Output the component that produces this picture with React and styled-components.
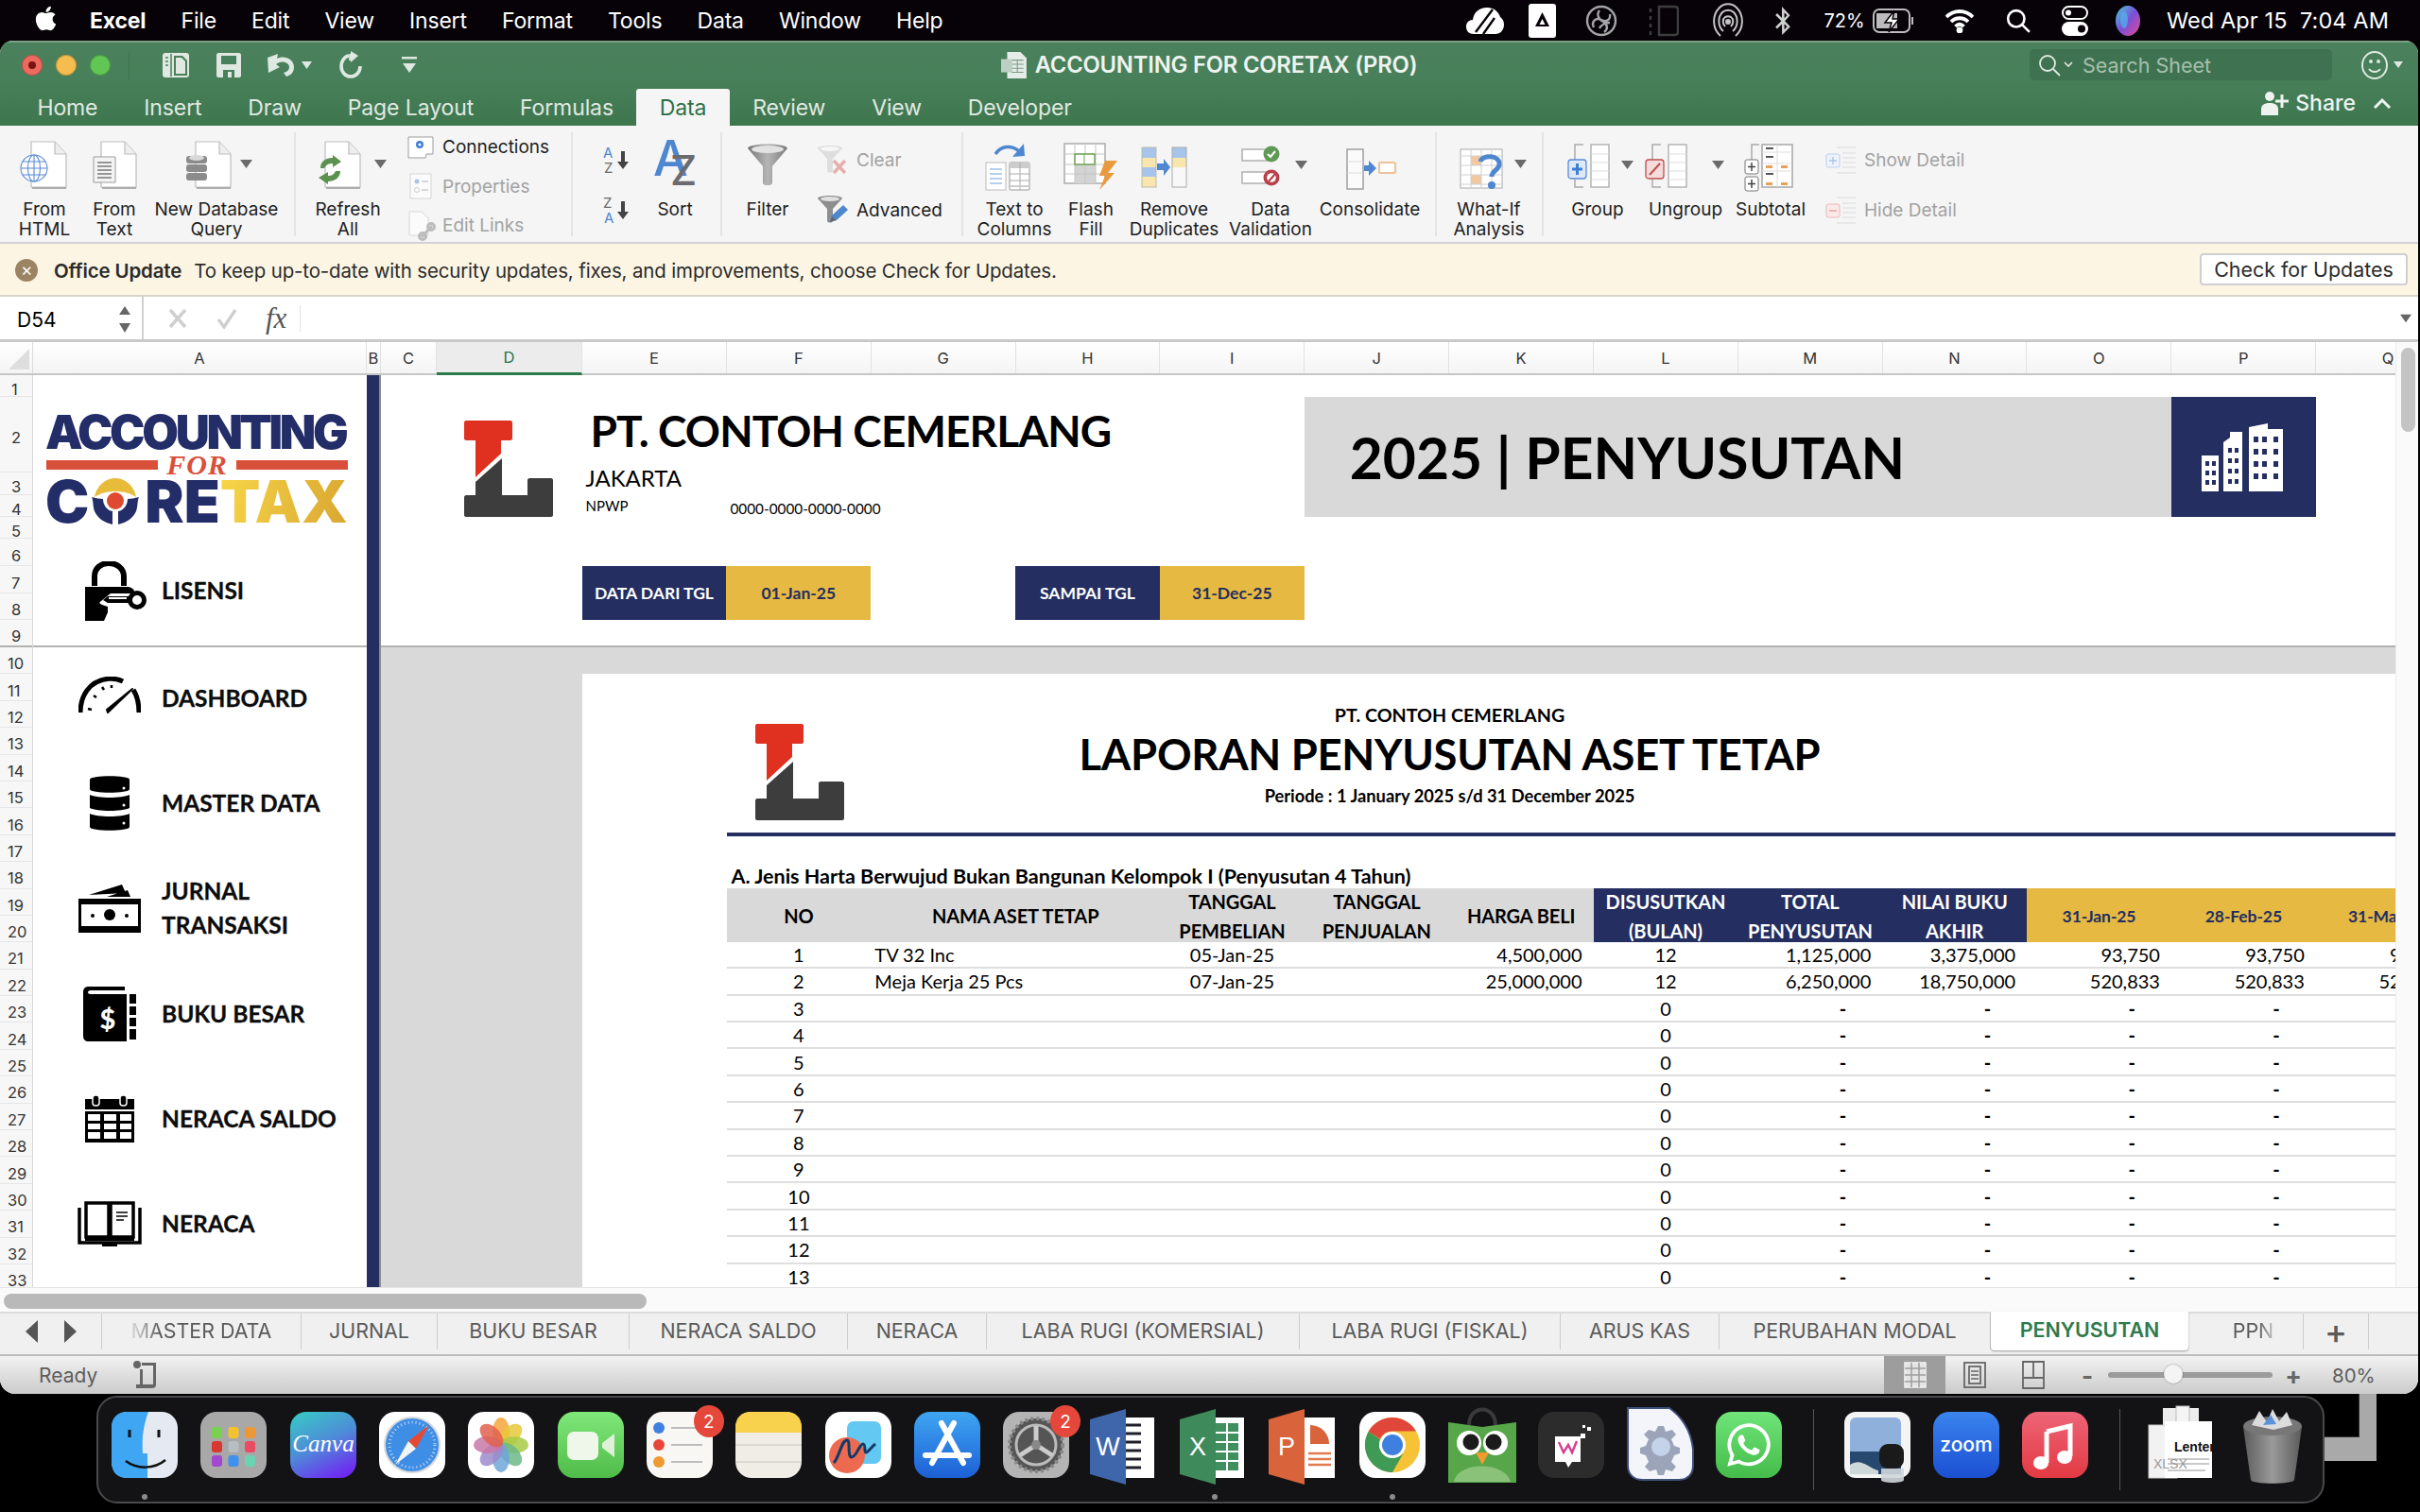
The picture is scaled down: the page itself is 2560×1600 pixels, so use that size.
import React from 'react';
import styled, { createGlobalStyle } from 'styled-components';
import { FaApple, FaBluetoothB, FaWhatsapp } from 'react-icons/fa';

const NAVY = '#242e61';
const GOLD = '#e5b942';
const COL = 152.85;
const SHEET_COLS = `59px 153.5px repeat(13, ${COL}px)`;

const GlobalStyle = createGlobalStyle`
  html, body { margin: 0; padding: 0; background: #000; }
  * { box-sizing: border-box; }
  body { font-family: Inter, "Liberation Sans", sans-serif; overflow: hidden; }
`;

const Screen = styled.div`
  width: 2560px;
  height: 1600px;
  background: #000;
  position: relative;
  overflow: hidden;
`;

/* ---- mac menu bar ---- */
const MenuBar = styled.div`
  height: 43px;
  background: #060208;
  color: #fff;
  display: flex;
  align-items: center;
  font-size: 23px;
  padding-left: 34px;
`;
const AppleMark = styled.div`
  width: 61px;
  display: flex;
  margin-top: -4px;
  font-size: 29px;
`;
const MenuList = styled.div`
  display: flex;
  gap: 37.2px;
`;
const MenuItem = styled.span`
  font-weight: ${p => (p.$bold ? 700 : 400)};
  letter-spacing: -0.2px;
`;
const StatusTray = styled.div`
  margin-left: auto;
  display: flex;
  align-items: center;
  padding-right: 33px;
`;
const TraySlot = styled.div`
  width: ${p => p.$w}px;
  display: flex;
  justify-content: center;
  align-items: center;
`;
const TrayText = styled.span`
  font-size: 23.5px;
  margin-left: 13px;
  letter-spacing: 0.1px;
  white-space: pre;
`;
const BatteryText = styled.span`
  font-size: 20px;
  margin-right: 8px;
`;

/* ---- excel window ---- */
const Window = styled.div`
  width: 2558px;
  height: 1432px;
  border-radius: 14px 14px 16px 16px;
  background: #fff;
  overflow: hidden;
  display: flex;
  flex-direction: column;
  position: relative;
  z-index: 2;
`;
const GreenHead = styled.div`
  height: 90px;
  flex: none;
  background: linear-gradient(#4b805c 0%, #47805a 40%, #3e774e 100%);
  border-top: 2px solid #78a085;
`;
const TitleRow = styled.div`
  height: 47px;
  display: grid;
  grid-template-columns: 1fr auto 1fr;
  align-items: center;
`;
const TitleLeft = styled.div`
  display: flex;
  align-items: center;
  padding-left: 23px;
`;
const Light = styled.span`
  width: 22px;
  height: 22px;
  border-radius: 50%;
  background: ${p => p.$c};
  border: 1px solid rgba(0, 0, 0, 0.2);
  margin-right: 14px;
  display: flex;
  align-items: center;
  justify-content: center;
  &::after {
    content: '';
    width: 8px;
    height: 8px;
    border-radius: 50%;
    background: ${p => p.$dot || 'transparent'};
  }
`;
const QuickTools = styled.div`
  margin-left: 5px;
  padding-left: 34px;
  border-left: 1px solid #43734f;
  height: 30px;
  display: flex;
  align-items: center;
  gap: 28px;
`;
const CustomizeSlot = styled.span`
  display: flex;
  margin-left: 14px;
`;
const TitleCenter = styled.div`
  display: flex;
  align-items: center;
  gap: 8px;
  color: #eef3ef;
  font-size: 23.8px;
  font-weight: 600;
  letter-spacing: -0.2px;
`;
const TitleRight = styled.div`
  display: flex;
  align-items: center;
  justify-content: flex-end;
  padding-right: 16px;
`;
const SearchBox = styled.div`
  width: 320px;
  height: 33px;
  background: #3f7250;
  border-radius: 5px;
  display: flex;
  align-items: center;
  padding-left: 9px;
  color: #a6c0ad;
  font-size: 21.5px;
  margin-right: 31px;
`;
const SearchCaret = styled.svg`
  margin: 0 10px 0 3px;
`;
const TabsRow = styled.div`
  height: 41px;
  display: flex;
  align-items: flex-end;
  padding-left: 15px;
`;
const RibbonTab = styled.div`
  height: 39px;
  padding: 0 24.4px;
  display: flex;
  align-items: center;
  font-size: 23px;
  letter-spacing: -0.1px;
  border-radius: 3px 3px 0 0;
  color: ${p => (p.$active ? '#2c7048' : '#e0e9e2')};
  background: ${p => (p.$active ? '#f5f5f5' : 'transparent')};
`;
const ShareBox = styled.div`
  margin-left: auto;
  display: flex;
  align-items: center;
  gap: 6px;
  color: #eef3ef;
  font-size: 23px;
  font-weight: 500;
  padding-right: 28px;
  height: 41px;
  align-self: flex-start;
  margin-top: -4px;
`;
const ShareCaret = styled.span`
  margin-left: 12px;
  display: flex;
`;

/* ---- ribbon ---- */
const Ribbon = styled.div`
  height: 125px;
  flex: none;
  background: #f5f5f5;
  border-bottom: 2px solid #d3d3d3;
  display: flex;
  align-items: flex-start;
  padding-top: 7px;
`;
const RibbonGroup = styled.div`
  width: ${p => p.$w}px;
  height: 110px;
  flex: none;
  display: flex;
  padding-left: ${p => p.$pad || 0}px;
  border-right: ${p => (p.$last ? 'none' : '2px solid #e4e4e4')};
`;
const RibbonButton = styled.div`
  width: ${p => p.$w}px;
  flex: none;
  margin-left: ${p => p.$ml || 0}px;
  padding-top: 3px;
  display: flex;
  flex-direction: column;
  align-items: center;
  font-size: 19px;
  line-height: 21.4px;
  color: #1e1e1e;
  text-align: center;
  white-space: nowrap;
  svg { display: block; flex: none; }
  span { flex: none; }
`;
const Stack = styled.div`
  margin-left: ${p => p.$ml || 0}px;
  margin-top: ${p => p.$mt || 0}px;
  flex: none;
  display: flex;
  flex-direction: column;
`;
const StackRow = styled.div`
  height: ${p => p.$h}px;
  flex: none;
  display: flex;
  align-items: center;
  gap: ${p => p.$gap ?? 7}px;
  font-size: 19px;
  white-space: nowrap;
  color: ${p => (p.$dim ? '#a2a2a2' : '#1e1e1e')};
`;

/* ---- update bar + formula bar ---- */
const UpdateBar = styled.div`
  height: 56px;
  flex: none;
  background: #fcf5e3;
  border-bottom: 2px solid #d6d3ca;
  display: flex;
  align-items: center;
  padding: 2px 11px 0 16px;
  font-size: 20.45px;
  color: #2b2b2b;
  letter-spacing: -0.12px;
`;
const UpdateClose = styled.span`
  width: 24px;
  height: 24px;
  border-radius: 50%;
  background: #9b8463;
  color: #fff;
  display: flex;
  align-items: center;
  justify-content: center;
  font-size: 15px;
  margin-right: 17px;
`;
const UpdateTitle = styled.b`
  font-weight: 600;
  margin-right: 13px;
`;
const UpdateButton = styled.div`
  margin-left: auto;
  width: 220px;
  height: 34px;
  margin-top: -2px;
  background: #fff;
  border: 2px solid #cfcfcf;
  border-radius: 4px;
  display: flex;
  align-items: center;
  justify-content: center;
  font-size: 21.4px;
  letter-spacing: 0;
`;
const FormulaBar = styled.div`
  height: 48px;
  flex: none;
  background: #fff;
  border-bottom: 3px solid #c9c9c9;
  display: flex;
  align-items: center;
  position: relative;
`;
const NameBox = styled.div`
  width: 152px;
  height: 100%;
  border-right: 2px solid #d0d0d0;
  display: flex;
  align-items: center;
  justify-content: space-between;
  padding: 3px 11px 0 18px;
  font-size: 21px;
`;
const FormulaTools = styled.div`
  display: flex;
  align-items: center;
  gap: 29px;
  padding: 0 14px 0 25px;
  height: 28px;
  border-right: 1px solid #e2e2e2;
`;
const Fx = styled.span`
  font-family: "Liberation Serif", serif;
  font-style: italic;
  font-size: 31px;
  color: #555;
`;
const FormulaCaret = styled.div`
  margin-left: auto;
  margin-right: 7px;
  display: flex;
`;

/* ---- sheet ---- */
const SheetArea = styled.div`
  flex: none;
  height: 1000px;
  display: flex;
`;
const SheetMain = styled.div`
  width: 2534px;
  flex: none;
  display: flex;
  flex-direction: column;
  overflow: hidden;
`;
const VScroll = styled.div`
  flex: 1;
  background: #fafafa;
  border-left: 1px solid #ececec;
  padding: 6px 0 0 5px;
`;
const VThumb = styled.div`
  width: 15px;
  height: 89px;
  border-radius: 8px;
  background: #c4c4c4;
`;
const ColumnHeads = styled.div`
  height: 35px;
  flex: none;
  display: flex;
  background: linear-gradient(#fff, #f4f4f4);
  border-bottom: 2px solid #c6c6c6;
  font-size: 16.5px;
  color: #333;
`;
const CornerCell = styled.div`
  width: 35px;
  flex: none;
  border-right: 1px solid #dcdcdc;
  display: flex;
  align-items: flex-end;
  justify-content: flex-end;
  padding: 0 3px 4px 0;
`;
const ColHead = styled.div`
  width: ${p => p.$w}px;
  flex: none;
  display: flex;
  align-items: center;
  justify-content: center;
  border-right: 1px solid #e2e2e2;
  color: ${p => (p.$sel ? '#2c7048' : '#333')};
  background: ${p => (p.$sel ? '#ececec' : 'transparent')};
  border-bottom: ${p => (p.$sel ? '3px solid #2c7a4b' : 'none')};
  margin-bottom: ${p => (p.$sel ? '-2px' : '0')};
`;
const SheetBody = styled.div`
  flex: 1;
  display: flex;
  min-height: 0;
`;
const RowHeads = styled.div`
  width: 35px;
  flex: none;
  background: #f7f7f7;
  border-right: 1px solid #d8d8d8;
  font-size: 16.5px;
  color: #333;
`;
const RowHead = styled.div`
  height: ${p => p.$h}px;
  padding: 7px 0 0 ${p => (p.$wide ? 8 : 12)}px;
  display: flex;
  align-items: center;
  border-bottom: 1px solid #e6e6e6;
  ${p => (p.$freeze ? 'border-bottom: 2px solid #b3b3b3;' : '')}
`;
const SideColumn = styled.div`
  width: 353px;
  flex: none;
  background: #fff;
  display: flex;
  flex-direction: column;
`;
const SideTop = styled.div`
  height: 288px;
  flex: none;
  padding: 41px 0 0 13px;
  border-bottom: 2px solid #b3b3b3;
`;
const BrandLine = styled.div`
  font-family: Inter, sans-serif;
  font-weight: 900;
  line-height: 1;
  white-space: nowrap;
`;
const BrandTop = styled(BrandLine)`
  height: 48px;
  font-size: 50px;
  letter-spacing: -3.3px;
  color: #232d68;
  margin-top: -6px;
`;
const BrandMid = styled.div`
  width: 319px;
  height: 24px;
  margin-left: 1px;
  display: flex;
  align-items: center;
  gap: 9px;
  font-family: "Liberation Serif", serif;
  font-style: italic;
  font-weight: 700;
  font-size: 30px;
  line-height: 24px;
  letter-spacing: 1px;
  color: #d9503a;
`;
const BrandBar = styled.span`
  flex: 1;
  height: 10px;
  background: #d9503a;
`;
const BrandBottom = styled(BrandLine)`
  height: 50px;
  font-size: 62px;
  letter-spacing: 0;
  color: #232d68;
  display: flex;
  align-items: center;
  margin-top: 2px;
`;
const BrandGold = styled.span`
  color: #e8bb3a;
  background: linear-gradient(100deg, #f7d648, #d9a631);
  -webkit-background-clip: text;
  background-clip: text;
  -webkit-text-fill-color: transparent;
`;
const NavList = styled.div`
  display: flex;
  flex-direction: column;
  padding-left: 48px;
  margin-top: -2px;
`;
const NavItem = styled.div`
  height: ${p => p.$h || 111.3}px;
  flex: none;
  display: grid;
  grid-template-columns: 65px 1fr;
  gap: 23px;
  align-items: center;
  justify-items: center;
  font-family: Lato, sans-serif;
  font-weight: 700;
  font-size: 24.5px;
  line-height: 36px;
  color: #0c0c0c;
  -webkit-text-stroke: 0.3px #0c0c0c;
  svg { display: block; }
`;
const NavLabel = styled.div`
  justify-self: start;
`;
const LicenseRow = styled(NavList)`
  margin-top: 37.5px;
  padding-left: 35px;
`;
const LockSlot = styled.div`
  margin-left: 14px;
`;
const ColB = styled.div`
  width: 15px;
  flex: none;
  background: ${NAVY};
  border-right: 2px solid #8d8d8d;
`;
const Workspace = styled.div`
  flex: 1;
  min-width: 0;
  display: flex;
  flex-direction: column;
`;
const TopPanel = styled.div`
  height: 288px;
  flex: none;
  background: #fff;
  border-bottom: 2px solid #b3b3b3;
  display: grid;
  grid-template-columns: ${SHEET_COLS};
  grid-template-rows: 23px 80px 24px 23px 23px 29px 29px 28px 27px;
`;
const TopLogo = styled.div`
  grid-column: 2 / 3;
  grid-row: 2 / 6;
  padding: 25px 0 0 29px;
`;
const CompanyBlock = styled.div`
  grid-column: 3 / 8;
  grid-row: 2 / 6;
  font-family: Lato, sans-serif;
  display: flex;
  flex-direction: column;
  color: #000;
`;
const CompanyName = styled.div`
  height: 60px;
  margin-top: 6px;
  padding-left: 9px;
  font-weight: 700;
  font-size: 46px;
  line-height: 60px;
  letter-spacing: -0.9px;
`;
const CompanyCity = styled.div`
  height: 30px;
  margin-top: 5px;
  padding-left: 4px;
  font-size: 24px;
  line-height: 30px;
`;
const NpwpRow = styled.div`
  height: 30px;
  display: grid;
  grid-template-columns: 153px auto;
  padding-left: 4px;
  font-size: 15px;
  line-height: 28px;
`;
const NpwpValue = styled.span`
  font-size: 15.3px;
  padding-top: 3px;
`;
const Banner = styled.div`
  grid-column: 8 / 14;
  grid-row: 2 / 5;
  background: #d9d9d9;
  display: flex;
  align-items: center;
  padding-left: 48px;
  font-family: Lato, sans-serif;
  font-weight: 700;
  font-size: 60.5px;
  color: #000;
  white-space: nowrap;
`;
const BannerIcon = styled.div`
  grid-column: 14 / 15;
  grid-row: 2 / 5;
  background: ${NAVY};
  display: flex;
  align-items: center;
  justify-content: center;
`;
const DateCell = styled.div`
  grid-column: ${p => p.$col} / span 1;
  grid-row: 7 / 9;
  background: ${p => (p.$gold ? GOLD : NAVY)};
  color: ${p => (p.$gold ? NAVY : '#fff')};
  display: flex;
  align-items: center;
  justify-content: center;
  font-family: Lato, sans-serif;
  font-weight: 700;
  font-size: 17.5px;
  white-space: nowrap;
`;
const ReportBack = styled.div`
  flex: 1;
  min-height: 0;
  background: #d9d9d9;
  padding: 28px 0 0 212.5px;
  overflow: hidden;
`;
const ReportPage = styled.div`
  background: #fff;
  min-height: 700px;
  padding-left: 153px;
  font-family: Lato, sans-serif;
  color: #000;
`;
const ReportHead = styled.div`
  width: 1530px;
  height: 168px;
  display: grid;
  grid-template-columns: 1fr auto 1fr;
`;
const ReportLogo = styled.div`
  padding: 53px 0 0 30px;
`;
const ReportTitles = styled.div`
  padding-top: 31px;
  display: flex;
  flex-direction: column;
  align-items: center;
  font-weight: 700;
`;
const ReportCompany = styled.div`
  font-size: 19.7px;
  line-height: 26px;
`;
const ReportName = styled.div`
  font-size: 45.4px;
  line-height: 56px;
  letter-spacing: -0.3px;
  white-space: nowrap;
`;
const ReportPeriod = styled.div`
  font-size: 18.3px;
  line-height: 26px;
  margin-top: 3px;
`;
const ReportRule = styled.div`
  height: 4px;
  background: ${NAVY};
`;
const SectionTitle = styled.div`
  height: 55px;
  padding: 29px 0 0 5px;
  font-weight: 700;
  font-size: 21.5px;
  line-height: 26px;
`;
const AssetTable = styled.div`
  display: grid;
  grid-template-columns: repeat(12, ${COL}px);
  grid-auto-rows: 28.42px;
  font-size: 20px;
`;
const HeadCell = styled.div`
  grid-column: span ${p => p.$span || 1};
  grid-row: span 2;
  display: flex;
  align-items: center;
  justify-content: center;
  text-align: center;
  font-weight: 700;
  line-height: 31px;
  white-space: nowrap;
  overflow: hidden;
  padding-top: ${p => (p.$double ? 4 : 2)}px;
  letter-spacing: -0.1px;
  background: ${p => (p.$tone === 'navy' ? NAVY : p.$tone === 'gold' ? GOLD : '#d9d9d9')};
  color: ${p => (p.$tone === 'navy' ? '#fff' : p.$tone === 'gold' ? NAVY : '#000')};
  font-size: ${p => (p.$tone === 'gold' ? 17.5 : 20)}px;
`;
const BodyCell = styled.div`
  display: flex;
  align-items: center;
  justify-content: ${p => (p.$align === 'right' ? 'flex-end' : p.$align === 'left' ? 'flex-start' : 'center')};
  padding-left: ${p => (p.$align === 'left' ? 4 : 0)}px;
  padding-right: ${p => (p.$align === 'right' ? p.$dash ? 38 : 12 : 0)}px;
  border-bottom: 2px solid #dedede;
  white-space: nowrap;
  font-weight: ${p => (p.$dash ? 700 : 400)};
`;
const HScrollRow = styled.div`
  height: 26px;
  flex: none;
  background: #fafafa;
  border-top: 1px solid #e4e4e4;
  padding: 6px 0 0 4px;
`;
const HThumb = styled.div`
  width: 680px;
  height: 16px;
  border-radius: 8px;
  background: #b9b9b9;
`;

/* ---- sheet tabs + status bar ---- */
const TabsBar = styled.div`
  height: 47px;
  flex: none;
  background: #f0f0f0;
  border-top: 2px solid #dcdcdc;
  border-bottom: 2px solid #bdbdbd;
  display: flex;
  font-size: 21.4px;
  color: #5a5a5a;
`;
const TabArrows = styled.div`
  width: 108px;
  flex: none;
  display: flex;
  align-items: center;
  justify-content: center;
  gap: 26px;
  height: 38px;
  border-right: 1px solid #cdcdcd;
`;
const SheetTab = styled.div`
  width: ${p => p.$w}px;
  flex: none;
  height: ${p => (p.$active ? 41 : 38)}px;
  margin-top: ${p => (p.$active ? -2 : 0)}px;
  padding-bottom: ${p => (p.$active ? 3 : 2)}px;
  display: flex;
  align-items: center;
  justify-content: center;
  border-right: ${p => (p.$active ? 'none' : '1px solid #cdcdcd')};
  white-space: nowrap;
  color: ${p => (p.$active ? '#2f7a4c' : 'inherit')};
  font-weight: ${p => (p.$active ? 600 : 400)};
  background: ${p => (p.$active ? '#fff' : 'transparent')};
  border-radius: ${p => (p.$active ? '0 0 4px 4px' : '0')};
  box-shadow: ${p => (p.$active ? '0 1px 2px rgba(0,0,0,.35)' : 'none')};
`;
const FadeText = styled.span`
  margin-left: ${p => (p.$fade === 'end' ? 16 : 0)}px;
  -webkit-mask-image: ${p => (p.$fade === 'end'
    ? 'linear-gradient(to right, #000 62%, rgba(0,0,0,.3))'
    : 'linear-gradient(to right, rgba(0,0,0,.25) 4%, #000 20%)')};
`;
const AddSheet = styled.div`
  width: 69px;
  height: 38px;
  display: flex;
  align-items: center;
  justify-content: center;
  font-size: 36px;
  font-weight: 500;
  border-right: 1px solid #cdcdcd;
`;
const StatusBar = styled.div`
  flex: 1;
  display: flex;
  align-items: center;
  padding-left: 41px;
  background: linear-gradient(#f2f2f2, #cbcbcb);
  font-size: 21px;
  color: #5d5d5d;
`;
const MacroIcon = styled.div`
  margin-left: 37px;
  display: flex;
`;
const ViewModes = styled.div`
  margin-left: auto;
  display: flex;
  align-items: stretch;
  height: 100%;
`;
const ViewMode = styled.div`
  width: ${p => p.$w}px;
  display: flex;
  align-items: center;
  justify-content: center;
  background: ${p => (p.$on ? '#9d9d9d' : 'transparent')};
`;
const ZoomArea = styled.div`
  display: flex;
  align-items: center;
  width: 376px;
  padding-left: 15px;
`;
const ZoomSign = styled.span`
  font-size: 26px;
  font-weight: 700;
  color: #666;
  width: 22px;
  text-align: center;
`;
const ZoomTrack = styled.div`
  width: 174px;
  height: 6px;
  margin: 0 11px;
  border-radius: 3px;
  background: #9b9b9b;
  position: relative;
`;
const ZoomThumb = styled.span`
  position: absolute;
  left: 59px;
  top: -8px;
  width: 20px;
  height: 20px;
  border-radius: 50%;
  background: #f4f4f4;
  box-shadow: 0 0 2px rgba(0,0,0,.4);
`;
const ZoomValue = styled.span`
  margin-left: 30px;
  font-size: 20.5px;
`;

/* ---- dock ---- */
const DesktopFrame = styled.div`
  position: absolute;
  left: 2458px;
  top: 1460px;
  width: 56px;
  height: 86px;
  border-right: 18px solid #a9a9a9;
  border-bottom: 25px solid #a9a9a9;
  box-shadow: inset -1px -1px 0 #333;
`;
const Dock = styled.div`
  position: absolute;
  left: 102px;
  top: 1477px;
  width: 2357px;
  height: 114px;
  border-radius: 22px;
  background: #131315;
  border: 2px solid #4a4a4c;
  display: flex;
  padding-left: 2px;
  z-index: 3;
`;
const DockItem = styled.div`
  width: 94.3px;
  height: 100%;
  flex: none;
  position: relative;
  display: flex;
  justify-content: center;
  padding-top: 5px;
  svg { display: block; }
`;
const DockGap = styled.div`
  width: 41px;
  flex: none;
  display: flex;
  justify-content: center;
  padding: 12px 0 12px;
  &::after {
    content: '';
    width: 1px;
    background: #55555a;
  }
`;
const DockDot = styled.span`
  position: absolute;
  left: 50%;
  margin-left: -3px;
  bottom: 2px;
  width: 6px;
  height: 6px;
  border-radius: 50%;
  background: #8a8a8a;
`;
const DockBadge = styled.span`
  position: absolute;
  top: 8px;
  left: 62px;
  width: 32px;
  height: 34px;
  border-radius: 50%;
  background: #e5483a;
  color: #fff;
  font-size: 19px;
  display: flex;
  align-items: center;
  justify-content: center;
`;

/* ---- drawings ---- */
const Tri = ({ c = '#6a6a6a', w = 13, h = 9 }) => (
  <svg width={w} height={h} viewBox="0 0 13 9"><path d="M0 0h13L6.5 9z" fill={c} /></svg>
);

const Page = ({ x, y = 7 }) => (
  <g transform={`translate(${x} ${y})`}>
    <path d="M0 0h25l12 13v35H0z" fill="#fff" stroke="#bdbdbd" strokeWidth="1.2" />
    <path d="M25 0v13h12" fill="#eeeeee" stroke="#bdbdbd" strokeWidth="1.2" />
    <path d="M1 49h36" stroke="#999" strokeWidth="1.4" />
  </g>
);

const Cylinder = ({ x, y }) => (
  <g transform={`translate(${x} ${y})`} fill="#8b8b8b">
    <rect y="2" width="22" height="8" rx="3" />
    <ellipse cx="11" cy="4" rx="8" ry="3" fill="#d9d9d9" />
    <rect y="11" width="22" height="8" rx="3" />
    <rect y="20" width="22" height="8" rx="3" />
  </g>
);

const HtmlIcon = () => (
  <svg width="72" height="68">
    <Page x={22} />
    <g fill="#fdfdff" stroke="#5b8bd6" strokeWidth="1.1">
      <circle cx="25" cy="35" r="14" />
      <ellipse cx="25" cy="35" rx="6.5" ry="14" />
      <path d="M11 35h28M13 28h24M13 42h24M25 21v28" />
    </g>
  </svg>
);
const TextIcon = () => (
  <svg width="76" height="68">
    <Page x={24} />
    <path d="M16 23h23v27H16z" fill="#f4f4f4" stroke="#9b9b9b" />
    <path d="M20 29h15M20 33h15M20 37h15M20 41h15M20 45h15" stroke="#777" strokeWidth="1.4" />
  </svg>
);
const DbIcon = () => (
  <svg width="140" height="68">
    <Page x={48} />
    <Cylinder x={38} y={20} />
    <path d="M95 26h13l-6.5 9z" fill="#6a6a6a" />
  </svg>
);
const RefreshIcon = () => (
  <svg width="90" height="68">
    <Page x={21} />
    <path d="M16 35c0-7 5-11 13-11l0-3 9 7-9 6v-4c-4 0-7 1-9 5zM37 38c0 7-6 11-13 11l0 3-10-7 10-6v4c4 0 6-1 8-5z" fill="#5d9150" />
    <path d="M73 26h13l-6.5 9z" fill="#6a6a6a" />
  </svg>
);
const ConnIcon = () => (
  <svg width="30" height="28">
    <path d="M1 3h26v18h-7l-1 4H1z" fill="#fff" stroke="#9d9d9d" />
    <circle cx="13" cy="11" r="4" fill="#3f7fd6" />
    <circle cx="13" cy="11" r="1.5" fill="#fff" />
  </svg>
);
const PropsIcon = () => (
  <svg width="30" height="28">
    <path d="M3 1h22v26H3z" fill="#fbfbfb" stroke="#d5d5d5" />
    <circle cx="10" cy="9" r="2.5" fill="#a9c4e8" />
    <circle cx="10" cy="18" r="2.5" fill="none" stroke="#ccc" />
    <path d="M15 9h7M15 18h7" stroke="#ccc" strokeWidth="1.4" />
  </svg>
);
const LinksIcon = () => (
  <svg width="30" height="32">
    <path d="M2 1h13l7 7v18H2z" fill="#fbfbfb" stroke="#d8d8d8" />
    <g fill="none" stroke="#bcbcbc" strokeWidth="3">
      <path d="M15 28l11-12" />
      <circle cx="25" cy="17" r="3.5" />
      <circle cx="16" cy="27" r="3.5" />
    </g>
  </svg>
);
const SortSmall = ({ top, bottom }) => (
  <svg width="30" height="32" style={{ fontFamily: 'Inter', fontSize: 15 }}>
    <text x="1" y="13" fill={top === 'A' ? '#4f86d0' : '#6a6a6a'}>{top}</text>
    <text x="2" y="29" fill={bottom === 'A' ? '#4f86d0' : '#6a6a6a'}>{bottom}</text>
    <path d="M20 6h4v11h4l-6 8-6-8h4z" fill="#444" />
  </svg>
);
const SortBig = () => (
  <svg width="80" height="68" style={{ fontFamily: 'Inter', fontWeight: 500 }}>
    <text x="17" y="43" fontSize="52" fill="#4f86d0">A</text>
    <text x="35" y="53" fontSize="44" fill="#6b6b70">Z</text>
  </svg>
);
const Funnel = ({ w, h }) => (
  <svg width={w} height={h} viewBox="0 0 44 44">
    <defs>
      <linearGradient id="fn" x1="0" x2="1" y1="0" y2="0">
        <stop offset="0" stopColor="#777" />
        <stop offset="0.5" stopColor="#b5b5b5" />
        <stop offset="1" stopColor="#7b7b7b" />
      </linearGradient>
    </defs>
    <path d="M1 5c0-6 42-6 42 0L27 24v18c-2 3-8 3-10 0V24z" fill="url(#fn)" />
    <ellipse cx="22" cy="6" rx="17" ry="4" fill="#e2e2e2" />
  </svg>
);
const FilterBig = () => (
  <svg width="70" height="68" viewBox="0 0 70 68">
    <g transform="translate(13 9)"><Funnel w={44} h={44} /></g>
  </svg>
);
const ClearIcon = () => (
  <svg width="34" height="32">
    <path d="M1 3c0-4 26-4 26 0L17 14v13c-1 2-5 2-6 0V14z" fill="#dedede" />
    <ellipse cx="14" cy="3.5" rx="10" ry="2.5" fill="#f6f6f6" />
    <path d="M18 16l12 13M30 16L18 29" stroke="#e5b0ac" strokeWidth="3.4" />
  </svg>
);
const AdvIcon = () => (
  <svg width="34" height="32">
    <path d="M1 3c0-4 26-4 26 0L17 14v13c-1 2-5 2-6 0V14z" fill="#8e8e8e" />
    <ellipse cx="14" cy="3.5" rx="10" ry="2.5" fill="#e0e0e0" />
    <path d="M14 28l2-7 12-11 5 5-12 11z" fill="#4f86d0" />
    <path d="M14 28l2-6 4 4z" fill="#666" />
  </svg>
);
const TextColsIcon = () => (
  <svg width="76" height="68">
    <path d="M18 20c6-9 17-10 25-3" fill="none" stroke="#4f86d0" strokeWidth="3.5" />
    <path d="M36 23l13-1-1-13z" fill="#4f86d0" />
    <rect x="8" y="29" width="21" height="29" fill="#fff" stroke="#bbb" />
    <path d="M12 36h13M12 41h13M12 46h13M12 51h13" stroke="#9fc0e8" strokeWidth="1.6" />
    <rect x="33" y="29" width="21" height="29" rx="1" fill="#fff" stroke="#999" />
    <path d="M33 29h21v6H33z" fill="#ccc" />
    <path d="M33 41h21M33 48h21M44 29v29" stroke="#aaa" />
    <path d="M33 54h21" stroke="#ccc" strokeWidth="2" />
  </svg>
);
const FlashIcon = () => (
  <svg width="86" height="68">
    <rect x="15" y="9" width="43" height="42" fill="#fff" stroke="#aaa" strokeWidth="1.5" />
    <path d="M26 31h22v20H26z" fill="#d4d4d4" />
    <path d="M15 20h43M15 31h43M15 41h43M26 9v42M37 9v42M48 9v42" stroke="#c4c4c4" />
    <rect x="26" y="20" width="21" height="11" fill="#fff" stroke="#6da355" strokeWidth="1.5" />
    <path d="M36 20v11" stroke="#6da355" />
    <path d="M58 27h13l-10 13h7L52 58l6-15h-6z" fill="#ea9a3e" />
  </svg>
);
const RemoveDupIcon = () => (
  <svg width="90" height="68">
    <path d="M11 13h15v11H11z" fill="#a7c4ea" />
    <path d="M11 24h15v10H11z" fill="#f9e6ad" />
    <path d="M11 34h15v10H11z" fill="#a7c4ea" />
    <path d="M11 44h15v11H11z" fill="#f9e6ad" />
    <rect x="11" y="13" width="15" height="42" fill="none" stroke="#bba" />
    <path d="M43 13h15v11H43z" fill="#a7c4ea" />
    <path d="M43 24h15v10H43z" fill="#f9e6ad" />
    <path d="M43 34h15v21H43z" fill="#f8f8f8" />
    <rect x="43" y="13" width="15" height="42" fill="none" stroke="#aaa" />
    <path d="M27 30h7v-5l7 9-7 9v-6h-7z" fill="#4f86d0" />
  </svg>
);
const ValidationIcon = () => (
  <svg width="114" height="68">
    <rect x="27" y="15" width="30" height="12" fill="#fff" stroke="#aaa" strokeWidth="1.4" />
    <rect x="27" y="39" width="30" height="12" fill="#fff" stroke="#aaa" strokeWidth="1.4" />
    <circle cx="58" cy="20" r="8.5" fill="#5f9a55" />
    <path d="M54 20l3 3 5-6" fill="none" stroke="#fff" strokeWidth="2" />
    <circle cx="58" cy="45" r="8.5" fill="#b9414a" />
    <circle cx="58" cy="45" r="4.8" fill="#fff" />
    <path d="M55 49l7-8" stroke="#b9414a" strokeWidth="2" />
    <path d="M83 27h13l-6.5 9z" fill="#6a6a6a" />
  </svg>
);
const ConsolidateIcon = () => (
  <svg width="96" height="68">
    <rect x="24" y="15" width="17" height="42" fill="#fbfbfb" stroke="#999" strokeWidth="1.4" />
    <path d="M24 28h17M24 40h17" stroke="#ddd" />
    <path d="M42 32h5v-5l8 8-8 8v-5h-5z" fill="#4f86d0" />
    <rect x="58" y="29" width="17" height="11" rx="1" fill="#fff" stroke="#ecae76" strokeWidth="1.5" />
  </svg>
);
const WhatIfIcon = () => (
  <svg width="90" height="68">
    <rect x="15" y="15" width="44" height="41" fill="#fff" stroke="#aaa" />
    <path d="M26 22h11v10H26zM26 42h11v10H26z" fill="#f2c8a0" />
    <path d="M15 22h44M15 32h44M15 42h44M15 52h44M26 15v41M37 15v41M48 15v41" stroke="#d0d0d0" />
    <path d="M36 28c2-8 21-7 20 3 0 6-8 6-8 13" fill="none" stroke="#4f86d0" strokeWidth="5" />
    <circle cx="48" cy="53" r="4" fill="#4f86d0" />
    <path d="M72 26h13l-6.5 9z" fill="#6a6a6a" />
  </svg>
);
const GroupIcon = ({ minus }) => (
  <svg width={minus ? 104 : 82} height="68">
    {minus ? (
      <g transform="translate(10 0)">
        <path d="M16 10h-9v16M7 47v8h9" fill="none" stroke="#aaa" strokeWidth="1.5" />
        <rect x="0" y="26" width="19" height="20" rx="3" fill="#f5dcda" stroke="#bd4e4e" strokeWidth="1.3" />
        <path d="M4 42l11-12" stroke="#bd4e4e" strokeWidth="2" />
        <rect x="24" y="10" width="19" height="45" fill="#fff" stroke="#aaa" strokeWidth="1.3" />
        <path d="M24 20h19M24 29h19M24 38h19M24 47h19" stroke="#ddd" />
        <path d="M70 27h13l-6.5 9z" fill="#6a6a6a" />
      </g>
    ) : (
      <g transform="translate(10 0)">
        <path d="M16 10h-9v16M7 47v8h9" fill="none" stroke="#aaa" strokeWidth="1.5" />
        <rect x="0" y="26" width="19" height="20" rx="3" fill="#dde8f8" stroke="#5b8bd6" strokeWidth="1.3" />
        <path d="M9.5 30v12M4 36h11" stroke="#3f7fd6" strokeWidth="3" />
        <rect x="24" y="10" width="19" height="45" fill="#fff" stroke="#aaa" strokeWidth="1.3" />
        <path d="M24 20h19M24 29h19M24 38h19M24 47h19" stroke="#ddd" />
        <path d="M56 27h13l-6.5 9z" fill="#6a6a6a" />
      </g>
    )}
  </svg>
);
const SubtotalIcon = () => (
  <svg width="76" height="68">
    <path d="M26 10h-8v16M18 36v5" fill="none" stroke="#aaa" strokeWidth="1.5" />
    <rect x="11" y="26" width="14" height="15" rx="2" fill="#fff" stroke="#777" />
    <path d="M18 29v9M14 33.5h8" stroke="#444" strokeWidth="1.5" />
    <rect x="11" y="44" width="14" height="15" rx="2" fill="#fff" stroke="#777" />
    <path d="M18 47v9M14 51.5h8" stroke="#444" strokeWidth="1.5" />
    <rect x="29" y="10" width="32" height="45" fill="#fff" stroke="#999" strokeWidth="1.3" />
    <path d="M45 10v45M29 18h32M29 30h32M29 38h32" stroke="#ddd" />
    <path d="M33 14h8M33 23h8M33 41h8" stroke="#555" strokeWidth="1.8" />
    <path d="M33 32h7v3h-7zM49 32h7v3h-7zM33 50h7v3h-7zM49 50h7v3h-7z" fill="#e8a258" />
  </svg>
);
const DetailIcon = ({ minus }) => (
  <svg width="34" height="30">
    <path d="M12 1h20M18 7h14M18 12h14M18 17h14M18 22h14M12 28h20" stroke="#e3e3e3" strokeWidth="1.5" />
    <rect x="1" y="8" width="14" height="14" rx="2" fill={minus ? '#fbe9e8' : '#eef3fb'} stroke={minus ? '#eab9b5' : '#bcd0ef'} />
    <path d={minus ? 'M4 15h8' : 'M8 11v8M4 15h8'} stroke={minus ? '#e2a5a0' : '#a9c4e8'} strokeWidth="1.4" />
  </svg>
);

const BrandO = () => (
  <svg width="58" height="52" viewBox="0 0 58 52" style={{ marginLeft: -1, marginRight: 2 }}>
    <path d="M7 21C9 9 19 1 29 1s20 8 22 20c-6-4-13-6-22-6S13 17 7 21z" fill="#e8bb3a" />
    <path d="M4 21c2 4 1 10 3 15 3 7 10 12 19 14V36c-6-1-10-7-10-13-3 0-8-1-12-2zM54 21c-2 4-1 10-3 15-3 7-10 12-19 14V36c6-1 10-7 10-13 3 0 8-1 12-2z" fill="#232d68" />
    <circle cx="29" cy="25" r="9" fill="#dd4a30" />
  </svg>
);

const LockIcon = () => (
  <svg width="65" height="63" viewBox="0 0 65 63">
    <path d="M10 26V16C10 7 17 2 25 2s16 5 16 14v10" fill="none" stroke="#000" strokeWidth="6" />
    <path d="M0 27h44c4 0 8 2 8 5l-1 2H27l-10 8c-3 2-1 3 1 4l6 2v6l-4 9H0z" fill="#000" />
    <path d="M24 37h24v7H24l-5-3z" fill="#000" />
    <path d="M25 39h19" stroke="#fff" strokeWidth="2" />
    <circle cx="55" cy="41" r="7.5" fill="none" stroke="#000" strokeWidth="5" />
  </svg>
);
const GaugeIcon = () => (
  <svg width="66" height="46" viewBox="0 0 66 46">
    <path d="M2 38C2 22 10 4 33 2c4 0 10 1 14 3" fill="none" stroke="#000" strokeWidth="5" />
    <path d="M58 14c4 6 6 14 6 24" fill="none" stroke="#000" strokeWidth="5" />
    <path d="M10 34l4 1M16 20l3 2M25 11l2 3M35 9v3" stroke="#000" strokeWidth="2.5" />
    <path d="M31 38l-1-3 27-22z" fill="#000" stroke="#000" strokeWidth="2" strokeLinejoin="round" />
  </svg>
);
const DbNavIcon = () => (
  <svg width="42" height="58" viewBox="0 0 42 58" fill="#000">
    <path d="M0 4c0-5 42-5 42 0v10c0 5-42 5-42 0z" />
    <path d="M0 20c8 4 34 4 42 0v14c-8 4-34 4-42 0z" />
    <path d="M0 40c8 4 34 4 42 0v14c0 5-42 5-42 0z" />
    <circle cx="36" cy="13" r="1.5" fill="#fff" />
    <circle cx="36" cy="31" r="1.5" fill="#fff" />
    <circle cx="36" cy="50" r="1.5" fill="#fff" />
  </svg>
);
const CashIcon = () => (
  <svg width="66" height="52" viewBox="0 0 66 52">
    <path d="M11 12L46 1l4 9zM30 14l22-7 3 7z" fill="#000" />
    <rect x="1.5" y="17.5" width="63" height="33" fill="#fff" stroke="#000" strokeWidth="3" />
    <rect x="1" y="16" width="64" height="6" fill="#000" />
    <rect x="0" y="45" width="66" height="6" fill="#000" />
    <path d="M1 17h7l-7 7zM65 17h-7l7 7zM1 51h7l-7-7zM65 51h-7l7-7z" fill="#000" />
    <circle cx="33" cy="33" r="6" fill="#000" />
    <circle cx="15" cy="34" r="2" fill="#000" />
    <circle cx="51" cy="34" r="2" fill="#000" />
  </svg>
);
const LedgerIcon = () => (
  <svg width="56" height="58" viewBox="0 0 56 58">
    <path d="M6 0h38v4H8c-4 0-4 4 0 4h38v50H6c-4 0-6-2-6-6V6c0-4 2-6 6-6z" fill="#000" />
    <path d="M49 8h7v10h-7zM49 21h7v9h-7zM49 33h7v9h-7zM49 45h7v11h-7z" fill="#000" />
    <text x="26" y="45" fontFamily="Lato" fontWeight="900" fontSize="29" fill="#fff" textAnchor="middle" style={{ WebkitTextStroke: 0 }}>$</text>
  </svg>
);
const CalendarIcon = () => (
  <svg width="54" height="50" viewBox="0 0 54 50" fill="#000">
    <path d="M1 4h52v11H1z" />
    <rect x="9" y="0" width="7" height="11" rx="3" stroke="#fff" strokeWidth="1.5" />
    <rect x="38" y="0" width="7" height="11" rx="3" stroke="#fff" strokeWidth="1.5" />
    <path d="M1 17h52v33H1zM4 20v7h13v-7zM21 20v7h13v-7zM38 20v7h12v-7zM4 30v6h13v-6zM21 30v6h13v-6zM38 30v6h12v-6zM4 39v7h13v-7zM21 39v7h13v-7zM38 39v7h12v-7z" fillRule="evenodd" />
  </svg>
);
const OpenBookIcon = () => (
  <svg width="68" height="48" viewBox="0 0 68 48">
    <path d="M2 7v37h64V7" fill="none" stroke="#000" strokeWidth="3.5" />
    <path d="M9 2h24v36H9zM35 2h24v36H35z" fill="#fff" stroke="#000" strokeWidth="3.5" />
    <rect x="8" y="38" width="52" height="4" fill="#000" />
    <path d="M26 44h16v4H26z" fill="#000" />
    <path d="M41 12h12M41 16h12M41 20h8" stroke="#000" strokeWidth="1.6" />
  </svg>
);
const LMark = () => (
  <svg width="95" height="102" viewBox="0 0 95 102">
    <path d="M2 0h47c1 0 2 1 2 2v17c0 1-1 2-2 2H39v14L12 60V21H2c-1 0-2-1-2-2V2C0 1 1 0 2 0z" fill="#e03020" />
    <path d="M40 40v39h27V63c0-1 1-2 2-2h23c1 0 2 1 2 2v37c0 1-1 2-2 2H2c-1 0-2-1-2-2V81c0-1 1-2 2-2h10V65z" fill="#3d3d3d" />
  </svg>
);
const BuildingsIcon = () => (
  <svg width="88" height="72" viewBox="0 0 88 72" fill="#fff">
    <path fillRule="evenodd" d="M0 34h18v38H0zM4 40v5h4v-5zM11 40v5h4v-5zM4 50v5h4v-5zM11 50v5h4v-5zM4 60v5h4v-5zM11 60v5h4v-5z" />
    <path fillRule="evenodd" d="M23 20l7-5v-6h13v63H23zM28 26v5h4v-5zM35 26v5h4v-5zM28 37v5h4v-5zM35 37v5h4v-5zM28 48v5h4v-5zM35 48v5h4v-5zM28 59v5h4v-5zM35 59v5h4v-5z" />
    <path fillRule="evenodd" d="M50 4l20-4v6h16v66H50zM55 14v6h5v-6zM64 14v6h5v-6zM76 14v6h5v-6zM55 27v6h5v-6zM64 27v6h5v-6zM76 27v6h5v-6zM55 40v6h5v-6zM64 40v6h5v-6zM76 40v6h5v-6zM55 53v6h5v-6zM64 53v6h5v-6zM76 53v6h5v-6z" />
  </svg>
);

/* dock icons: a 70x70 tile drawn at (5,10) in an 80x90 box */
const Tile = ({ children, fill = '#fff' }) => (
  <svg width="80" height="90" viewBox="0 0 80 90">
    <rect x="5" y="10" width="70" height="70" rx="17" fill={fill} />
    {children}
  </svg>
);
const dockIcons = [
  <Tile key="finder" fill="#e4e9f2">
    <path d="M22 10h22c-6 16-7 30-6 44h5v26H22C11 80 5 74 5 63V27c0-11 6-17 17-17z" fill="#3ea6f2" />
    <path d="M24 29v8M55 29v8" stroke="#111" strokeWidth="3" />
    <path d="M20 62c12 9 30 9 42-1" fill="none" stroke="#111" strokeWidth="2.5" />
  </Tile>,
  <Tile key="launch" fill="#a8a8a8">
    {['#7ad14f', '#f4c22e', '#ee9735', '#d8382f', '#b7bec2', '#ea4d63', '#a248cf', '#3f90ef', '#6bd3b1'].map((c, i) => (
      <rect key={c} x={17 + (i % 3) * 17.5} y={26 + Math.floor(i / 3) * 15} width="11" height="12" rx="3" fill={c} />
    ))}
  </Tile>,
  <svg key="canva" width="80" height="90" viewBox="0 0 80 90">
    <defs>
      <linearGradient id="canvaG" x1="0.2" x2="0.7" y1="0" y2="1">
        <stop offset="0" stopColor="#39c4c7" /><stop offset="0.5" stopColor="#4f8ad8" /><stop offset="1" stopColor="#6d2bf0" />
      </linearGradient>
    </defs>
    <rect x="5" y="10" width="70" height="70" rx="17" fill="url(#canvaG)" />
    <text x="40" y="52" textAnchor="middle" fontFamily="Liberation Serif" fontStyle="italic" fontSize="25" fill="#fff">Canva</text>
  </svg>,
  <Tile key="safari">
    <circle cx="40" cy="45" r="29" fill="#3f8ee6" stroke="#d8d8d8" strokeWidth="2" />
    <circle cx="40" cy="45" r="24" fill="none" stroke="#bcd7f5" strokeWidth="3" strokeDasharray="1 3" />
    <path d="M58 24L36 41l8 8z" fill="#e8482f" />
    <path d="M22 66l14-25 8 8z" fill="#f4f4f4" />
  </Tile>,
  <Tile key="photos">
    {['#f4a63a', '#e8c93a', '#a8cb45', '#6cb88a', '#6ea6d8', '#9c8bcb', '#c878a8', '#e0614f'].map((c, i) => (
      <ellipse key={c} cx="40" cy="31" rx="9" ry="15" fill={c} opacity="0.85" transform={`rotate(${i * 45} 40 45)`} />
    ))}
  </Tile>,
  <svg key="facetime" width="80" height="90" viewBox="0 0 80 90">
    <defs>
      <linearGradient id="ftG" x1="0" x2="0" y1="0" y2="1"><stop offset="0" stopColor="#7fe87a" /><stop offset="1" stopColor="#4fbb48" /></linearGradient>
    </defs>
    <rect x="5" y="10" width="70" height="70" rx="17" fill="url(#ftG)" />
    <rect x="15" y="31" width="33" height="30" rx="7" fill="#eef7ea" />
    <path d="M52 43l13-10v25L52 48z" fill="#dff0d8" />
  </svg>,
  <Tile key="remind" fill="#f8f7f3">
    <circle cx="18" cy="27" r="6" fill="#3f7fe0" />
    <circle cx="18" cy="45" r="6" fill="#e8453a" />
    <circle cx="18" cy="63" r="6" fill="#ef9a33" />
    <path d="M31 27h33M31 45h33M31 63h33" stroke="#bdbdbd" strokeWidth="1.8" />
  </Tile>,
  <Tile key="notes" fill="#efede6">
    <path d="M5 27c0-11 6-17 17-17h36c11 0 17 6 17 17v5H5z" fill="#f8d24c" />
    <path d="M5 45h70M5 63h70" stroke="#d6d4cc" strokeWidth="1.5" />
  </Tile>,
  <Tile key="freeform">
    <rect x="28" y="20" width="36" height="45" rx="7" fill="#63c8f2" />
    <circle cx="28" cy="56" r="19" fill="#ec6a50" />
    <path d="M14 64c6-6 8-24 14-24 4 0 0 18 5 18 5 0 8-14 12-14 3 0 1 9 3 9s6-6 10-9" fill="none" stroke="#123a66" strokeWidth="3" />
  </Tile>,
  <svg key="appstore" width="80" height="90" viewBox="0 0 80 90">
    <defs>
      <linearGradient id="asG" x1="0" x2="0" y1="0" y2="1"><stop offset="0" stopColor="#3ea6f2" /><stop offset="1" stopColor="#1d5fd6" /></linearGradient>
    </defs>
    <rect x="5" y="10" width="70" height="70" rx="17" fill="url(#asG)" />
    <path d="M34 22l23 42M47 22L24 64M17 56h46" stroke="#fff" strokeWidth="6" strokeLinecap="round" />
  </svg>,
  <Tile key="prefs" fill="#b4b4b4">
    <circle cx="40" cy="45" r="28" fill="#555" />
    <circle cx="40" cy="45" r="28" fill="none" stroke="#888" strokeWidth="4" strokeDasharray="3 3" />
    <circle cx="40" cy="45" r="21" fill="none" stroke="#bbb" strokeWidth="3" />
    <path d="M40 45V25M40 45L23 56M40 45l17 11" stroke="#ccc" strokeWidth="5" />
    <circle cx="40" cy="45" r="5" fill="#888" />
  </Tile>,
  <svg key="word" width="90" height="90" viewBox="0 0 90 90">
    <rect x="40" y="16" width="36" height="64" fill="#fff" />
    <path d="M44 24h28M44 33h28M44 42h28M44 51h28M44 60h28M44 69h28" stroke="#1f1f2a" strokeWidth="3" strokeDasharray="18 10" />
    <path d="M8 18L46 7v80L8 76z" fill="#3f66ab" />
    <text x="27" y="56" textAnchor="middle" fontFamily="Liberation Sans" fontSize="27" fill="#fff">W</text>
  </svg>,
  <svg key="excel" width="90" height="90" viewBox="0 0 90 90">
    <rect x="40" y="16" width="36" height="64" fill="#fff" />
    <path d="M46 22h24v50H46z" fill="#3f8f5f" />
    <path d="M46 32h24M46 42h24M46 52h24M46 62h24M58 22v50" stroke="#fff" strokeWidth="2" />
    <path d="M8 18L46 7v80L8 76z" fill="#3f8a5b" />
    <text x="27" y="56" textAnchor="middle" fontFamily="Liberation Sans" fontSize="27" fill="#fff">X</text>
  </svg>,
  <svg key="ppt" width="90" height="90" viewBox="0 0 90 90">
    <rect x="40" y="16" width="38" height="64" fill="#fff" />
    <path d="M52 24v20h20a20 20 0 0 0-20-20z" fill="#d9633a" />
    <path d="M50 54h24M50 60h24M50 66h24" stroke="#e2794f" strokeWidth="2.5" />
    <path d="M8 18L46 7v80L8 76z" fill="#d9633a" />
    <text x="27" y="56" textAnchor="middle" fontFamily="Liberation Sans" fontSize="27" fill="#fff">P</text>
  </svg>,
  <Tile key="chrome">
    <circle cx="40" cy="45" r="29" fill="#f6c236" />
    <path d="M40 16a29 29 0 0 1 25 14.5H40a14.5 14.5 0 0 0-13 8L14.5 31A29 29 0 0 1 40 16z" fill="#e0463a" />
    <path d="M14.5 31A29 29 0 0 0 40 74l12-21a14.5 14.5 0 0 1-25-14z" fill="#3f9a56" />
    <circle cx="40" cy="45" r="14" fill="#fff" />
    <circle cx="40" cy="45" r="11" fill="#3f7fe0" />
  </Tile>,
  <svg key="owl" width="80" height="90" viewBox="0 0 80 90">
    <path d="M26 24c0-22 28-22 28 0" fill="none" stroke="#3a3a3a" strokeWidth="4" />
    <path d="M4 21l36 5 36-5v64H4z" fill="#57a64a" />
    <path d="M10 84c4-22 54-22 60 0z" fill="#8ac27a" />
    <circle cx="26" cy="43" r="13" fill="#fff" /><circle cx="54" cy="43" r="13" fill="#fff" />
    <circle cx="28" cy="42" r="8.5" fill="#1b1b1b" /><circle cx="52" cy="42" r="8.5" fill="#1b1b1b" />
    <path d="M33 53h14l-7 13z" fill="#f29a2e" />
  </svg>,
  <Tile key="chat" fill="#2c2c2c">
    <path d="M23 36h27v27H41l-4 6-3-6H23z" fill="#fff" />
    <path d="M27 42l5 11 5-8 4 8 5-12" fill="none" stroke="#d63d8f" strokeWidth="2.4" />
    <path d="M50 33h5v5h-5zM57 26h4v4h-4zM52 24h3v3h-3z" fill="#fff" />
  </Tile>,
  <svg key="gearDoc" width="80" height="90" viewBox="0 0 80 90">
    <path d="M6 6h44c14 10 23 25 25 44v17c0 9-6 15-15 15H22C12 82 6 76 6 67z" fill="#f4f5fa" stroke="#3f5078" strokeWidth="2" />
    <path d="M38 25l6 0 2 6 7-2 4 5-5 5 3 7 6 2v6l-6 2-3 7 5 5-4 5-7-2-2 6h-6l-2-6-7 2-5-5 4-5-3-7-6-2v-6l6-2 3-7-5-5 5-5 7 2z" fill="#9ba4b8" />
    <circle cx="41" cy="47" r="10" fill="#c4d2ea" />
  </svg>,
  <svg key="wa" width="80" height="90" viewBox="0 0 80 90">
    <defs>
      <linearGradient id="waG" x1="0" x2="0" y1="0" y2="1"><stop offset="0" stopColor="#6fe57a" /><stop offset="1" stopColor="#45bb4a" /></linearGradient>
    </defs>
    <rect x="5" y="10" width="70" height="70" rx="17" fill="url(#waG)" />
    <foreignObject x="14" y="19" width="52" height="52"><FaWhatsapp size={52} color="#fff" /></foreignObject>
  </svg>,
  'gap',
  <svg key="preview" width="80" height="90" viewBox="0 0 80 90">
    <rect x="5" y="10" width="70" height="70" rx="12" fill="#f4f4f4" />
    <rect x="11" y="16" width="54" height="60" rx="6" fill="#8fb0da" />
    <path d="M11 52h54v24H11z" fill="#27496f" />
    <path d="M11 66c12-8 20 4 30 6v4H11z" fill="#cfd8d8" />
    <rect x="42" y="44" width="26" height="26" rx="9" fill="#1a1a1a" />
    <path d="M44 70h24v12c0 4-24 4-24 0z" fill="#cfd6da" opacity="0.9" />
  </svg>,
  <svg key="zoom" width="80" height="90" viewBox="0 0 80 90">
    <defs>
      <linearGradient id="zmG" x1="0" x2="0" y1="0" y2="1"><stop offset="0" stopColor="#3a84ee" /><stop offset="1" stopColor="#1c4fd2" /></linearGradient>
    </defs>
    <rect x="5" y="10" width="70" height="70" rx="17" fill="url(#zmG)" />
    <text x="40" y="52" textAnchor="middle" fontFamily="Inter" fontWeight="500" fontSize="21" fill="#fff">zoom</text>
  </svg>,
  <svg key="music" width="80" height="90" viewBox="0 0 80 90">
    <defs>
      <linearGradient id="muG" x1="0" x2="0" y1="0" y2="1"><stop offset="0" stopColor="#ee6478" /><stop offset="1" stopColor="#e23a42" /></linearGradient>
    </defs>
    <rect x="5" y="10" width="70" height="70" rx="17" fill="url(#muG)" />
    <path d="M31 31l25-6v32" fill="none" stroke="#fff" strokeWidth="5" />
    <path d="M31 31v33" stroke="#fff" strokeWidth="5" />
    <ellipse cx="25" cy="64" rx="8" ry="7" fill="#fff" />
    <ellipse cx="50" cy="58" rx="8" ry="7" fill="#fff" />
  </svg>,
  'gap',
  <svg key="papers" width="80" height="90" viewBox="0 0 80 90">
    <rect x="18" y="6" width="38" height="50" fill="#ececec" />
    <rect x="32" y="4" width="14" height="20" fill="#f4f4f4" stroke="#bbb" />
    <rect x="3" y="24" width="30" height="56" fill="#f2f2f2" stroke="#ccc" />
    <path d="M20 20h50v60H20z" fill="#fff" />
    <path d="M23 60h44M23 65h44M23 72h40" stroke="#c9c9c9" strokeWidth="2" />
    <text x="30" y="52" fontFamily="Liberation Sans" fontWeight="700" fontSize="14" fill="#111">Lenter</text>
    <text x="8" y="70" fontFamily="Liberation Sans" fontSize="14" fill="#999">XLSX</text>
  </svg>,
  <svg key="trash" width="80" height="90" viewBox="0 0 80 90">
    <defs>
      <linearGradient id="trG" x1="0" x2="1" y1="0" y2="0"><stop offset="0" stopColor="#5c5c5c" /><stop offset="0.5" stopColor="#9a9a9a" /><stop offset="1" stopColor="#5a5a5a" /></linearGradient>
    </defs>
    <path d="M9 26h62l-8 56c-1 5-45 5-46 0z" fill="url(#trG)" />
    <ellipse cx="40" cy="25" rx="31" ry="10" fill="#777" />
    <path d="M18 24l8-15 8 12 6-14 7 13 8-10 6 14-20 5z" fill="#dcdcdc" />
    <path d="M30 24l8-11 6 10z" fill="#5c92d9" />
  </svg>,
];

const CloudIcon = () => (
  <svg width="40" height="32" viewBox="0 0 40 32" fill="#fff">
    <path d="M8 30c-5 0-8-3-8-8 0-4 3-7 7-7 1-8 7-13 15-13 7 0 12 4 14 10 3 2 4 5 4 8 0 6-4 10-9 10z" />
    <path d="M10 28L28 4M18 30l12-17" stroke="#060208" strokeWidth="2.4" />
  </svg>
);
const TagIcon = () => (
  <svg width="29" height="36" viewBox="0 0 29 36">
    <rect width="29" height="36" rx="3" fill="#fff" />
    <path d="M14.5 9L22 24H7z" fill="#060208" />
    <path d="M14.5 16l3 6h-6z" fill="#fff" />
  </svg>
);
const CcIcon = () => (
  <svg width="36" height="36" viewBox="0 0 36 36" fill="none" stroke="#a4a4a4" strokeWidth="2.4">
    <circle cx="18" cy="18" r="15" />
    <path d="M10 25c-3-6 2-11 8-8 5 3 10 0 9-6M16 7c-4 5 0 10 4 12 5 3 5 8 1 11M27 20c-4 0-9 2-11 6" />
  </svg>
);
const DisplayDim = () => (
  <svg width="32" height="34" viewBox="0 0 32 34" fill="none" stroke="#3d3d3d" strokeWidth="2.5">
    <path d="M11 2h17c2 0 3 1 3 3v24c0 2-1 3-3 3H11zM2 4v4M2 12v4M2 20v4M2 28v4" />
  </svg>
);
const AirdropIcon = () => (
  <svg width="32" height="40" viewBox="0 0 32 40" fill="none" stroke="#c4c4c4" strokeWidth="2">
    <path d="M8 36C-1 28-1 14 7 6c5-5 13-5 18 0 8 8 8 22-1 30" />
    <path d="M11 31C5 26 5 16 10 11c3-3 9-3 12 0 5 5 5 15-1 20" />
    <path d="M13 26c-3-3-3-8 0-10 2-1 4-1 6 0 3 2 3 7 0 10" />
    <circle cx="16" cy="21" r="2" fill="#c4c4c4" />
  </svg>
);
const BatteryIcon = () => (
  <svg width="44" height="26" viewBox="0 0 44 26" fill="none" stroke="#bcbcbc" strokeWidth="2">
    <rect x="1" y="1" width="38" height="24" rx="6" />
    <path d="M42 9v8" />
    <path d="M4 5h22v16H4z" fill="#bcbcbc" stroke="none" />
    <path d="M23 2l-10 13h7l-3 10 11-14h-7z" fill="#fff" stroke="#060208" strokeWidth="1.5" />
  </svg>
);
const WifiIcon = () => (
  <svg width="32" height="26" viewBox="0 0 32 26" fill="none" stroke="#fff" strokeWidth="3.8">
    <path d="M2 9c8-8 20-8 28 0M7 14c5-5 13-5 18 0M11.5 19c3-3 6-3 9 0" />
    <circle cx="16" cy="23" r="1.5" fill="#fff" />
  </svg>
);
const SearchIcon = ({ s = 24, c = '#fff', w = 2.4 }) => (
  <svg width={s} height={s} viewBox="0 0 24 24" fill="none" stroke={c} strokeWidth={w}>
    <circle cx="10" cy="10" r="8" />
    <path d="M16 16l7 7" />
  </svg>
);
const ToggleIcon = () => (
  <svg width="28" height="32" viewBox="0 0 28 32">
    <rect x="1" y="1" width="26" height="13" rx="6.5" fill="none" stroke="#fff" strokeWidth="2" />
    <circle cx="7" cy="7.5" r="3" fill="#fff" />
    <rect y="17" width="28" height="15" rx="7.5" fill="#fff" />
    <circle cx="21" cy="24.5" r="4" fill="#060208" />
  </svg>
);
const SiriIcon = () => (
  <svg width="26" height="32" viewBox="0 0 26 32">
    <defs>
      <linearGradient id="siriG" x1="0" x2="1" y1="0" y2="1">
        <stop offset="0" stopColor="#48d0d8" /><stop offset="0.5" stopColor="#7a4fd8" /><stop offset="1" stopColor="#e84a8f" />
      </linearGradient>
    </defs>
    <ellipse cx="13" cy="16" rx="13" ry="16" fill="url(#siriG)" />
    <ellipse cx="9" cy="15" rx="4" ry="9" fill="#4fb6ec" opacity="0.7" />
  </svg>
);
const SideDocIcon = () => (
  <svg width="30" height="30" viewBox="0 0 30 30">
    <rect x="1" y="2" width="28" height="26" rx="3" fill="#dfe8e1" />
    <path d="M10 3v24" stroke="#47805a" strokeWidth="1.5" />
    <path d="M13 5h9l5 5v16H13z" fill="#47805a" />
    <path d="M15 7h6l4 4v13H15z" fill="#dfe8e1" />
    <path d="M4 7h3M4 11h3M4 15h3" stroke="#47805a" strokeWidth="1.5" />
  </svg>
);
const SaveIcon = () => (
  <svg width="26" height="30" viewBox="0 0 26 30">
    <path d="M2 2h22c1 0 2 1 2 2v22c0 1-1 2-2 2H2c-1 0-2-1-2-2V4c0-1 1-2 2-2z" fill="#dfe8e1" />
    <rect x="5" y="5" width="16" height="9" fill="#47805a" />
    <path d="M7 28v-8h12v8z" fill="#47805a" />
    <rect x="12" y="22" width="4" height="6" fill="#dfe8e1" />
  </svg>
);
const UndoIcon = () => (
  <svg width="48" height="26" viewBox="0 0 48 26">
    <path d="M0 5l11-4-1 5c7-4 18 0 18 9 0 6-4 9-8 10l-3-4c4-1 6-3 6-6 0-5-8-8-14-3l4 3-12 6z" fill="#dfe8e1" />
    <path d="M36 9h11l-5.5 8z" fill="#dfe8e1" />
  </svg>
);
const RedoIcon = () => (
  <svg width="24" height="30" viewBox="0 0 24 30" fill="none" stroke="#dfe8e1" strokeWidth="3.6">
    <path d="M10 5c-5 1-8 6-8 11 0 7 5 11 10 11s10-4 10-11" />
    <path d="M12 0l8 5-8 7z" fill="#dfe8e1" stroke="none" />
    <path d="M12 3v7" />
  </svg>
);
const CustomizeIcon = () => (
  <svg width="16" height="20" viewBox="0 0 16 20" fill="#dfe8e1">
    <rect y="1" width="16" height="2.5" />
    <path d="M1 8h14l-7 10z" />
  </svg>
);
const XlsDocIcon = () => (
  <svg width="28" height="32" viewBox="0 0 26 28">
    <path d="M6 1h13l6 6v20H6z" fill="#e6ece8" />
    <path d="M10 9h12M10 13h12M10 17h12M10 21h12M16 9v12" stroke="#7a9a85" />
    <rect x="0" y="8" width="11" height="13" fill="#bccfc2" />
  </svg>
);
const SmileyIcon = () => (
  <svg width="28" height="30" viewBox="0 0 28 30" fill="none" stroke="#dfe8e1" strokeWidth="2">
    <ellipse cx="14" cy="15" rx="13" ry="14" />
    <path d="M8 19c3 4 9 4 12 0" />
    <circle cx="10" cy="11" r="1" fill="#dfe8e1" /><circle cx="18" cy="11" r="1" fill="#dfe8e1" />
  </svg>
);
const ShareUser = () => (
  <svg width="30" height="26" viewBox="0 0 30 26" fill="#eef3ef">
    <circle cx="9" cy="6" r="5" />
    <path d="M0 26v-6c0-5 3-7 9-7s9 2 9 7v6z" />
    <path d="M22 4v14M15 11h14" stroke="#eef3ef" strokeWidth="3" />
  </svg>
);
const ChevronUp = () => (
  <svg width="20" height="12" viewBox="0 0 20 12" fill="none" stroke="#eef3ef" strokeWidth="3">
    <path d="M2 11l8-8 8 8" />
  </svg>
);
const NameStepper = () => (
  <svg width="14" height="28" viewBox="0 0 14 28" fill="#666">
    <path d="M7 0l6 9H1zM1 18h12l-6 10z" />
  </svg>
);
const GridView = () => (
  <svg width="24" height="28" viewBox="0 0 24 28" fill="none" stroke="#f4f4f4" strokeWidth="1.5">
    <rect x="1" y="1" width="22" height="26" fill="#e4e4e4" />
    <path d="M8 1v26M16 1v26M1 7h22M1 14h22M1 21h22" stroke="#9d9d9d" />
  </svg>
);
const PageView = () => (
  <svg width="24" height="28" viewBox="0 0 24 28" fill="none" stroke="#666" strokeWidth="1.8">
    <rect x="1" y="1" width="22" height="26" />
    <rect x="6" y="5" width="12" height="18" fill="#e4e4e4" />
    <path d="M8 10h8M8 14h8M8 18h8" strokeWidth="1.5" />
  </svg>
);
const BreakView = () => (
  <svg width="24" height="30" viewBox="0 0 24 30" fill="none" stroke="#666" strokeWidth="1.8">
    <path d="M1 1h22v17H1zM1 18v11h22V18M12 1v17" />
  </svg>
);
const MacroSvg = () => (
  <svg width="28" height="32" viewBox="0 0 28 32" fill="#666">
    <circle cx="5" cy="5" r="4" />
    <path d="M10 3h15v24c0 2-2 3-4 3H4v-4h4V10h3v16h11V6H10z" />
  </svg>
);

/* ---- data ---- */
const topRows = [23, 80, 24, 23, 23, 29, 29, 28, 29];
const rowNumbers = Array.from({ length: 33 }, (_, i) => i + 1);
const sheetCols = [['C', 59], ['D', 154], ...'EFGHIJKLMNOPQ'.split('').map(c => [c, COL])];
const sheetTabs = [
  ['MASTER DATA', 211, false, 'start'], ['JURNAL', 144], ['BUKU BESAR', 203], ['NERACA SALDO', 231], ['NERACA', 147],
  ['LABA RUGI (KOMERSIAL)', 331], ['LABA RUGI (FISKAL)', 276], ['ARUS KAS', 168], ['PERUBAHAN MODAL', 287],
  ['PENYUSUTAN', 209, true], ['PPN', 122, false, 'end'],
];
const months = ['31-Jan-25', '28-Feb-25', '31-Mar-25'];
const filled = [
  { name: 'TV 32 Inc', date: '05-Jan-25', price: '4,500,000', span: 12, total: '1,125,000', book: '3,375,000', month: '93,750' },
  { name: 'Meja Kerja 25 Pcs', date: '07-Jan-25', price: '25,000,000', span: 12, total: '6,250,000', book: '18,750,000', month: '520,833' },
];
const assetRows = Array.from({ length: 13 }, (_, i) => ({ no: i + 1, span: 0, ...filled[i] }));
const Money = ({ v }) => (v ? <BodyCell $align="right">{v}</BodyCell> : <BodyCell $align="right" $dash>-</BodyCell>);

const MENU = ['File', 'Edit', 'View', 'Insert', 'Format', 'Tools', 'Data', 'Window', 'Help'];
const TABS = ['Home', 'Insert', 'Draw', 'Page Layout', 'Formulas', 'Data', 'Review', 'View', 'Developer'];

export default function App() {
  return (
    <Screen>
      <GlobalStyle />
      <MenuBar>
        <AppleMark><FaApple /></AppleMark>
        <MenuList>
          <MenuItem $bold>Excel</MenuItem>
          {MENU.map(m => <MenuItem key={m}>{m}</MenuItem>)}
        </MenuList>
        <StatusTray>
          <TraySlot $w={60}><CloudIcon /></TraySlot>
          <TraySlot $w={62}><TagIcon /></TraySlot>
          <TraySlot $w={62}><CcIcon /></TraySlot>
          <TraySlot $w={70}><DisplayDim /></TraySlot>
          <TraySlot $w={66}><AirdropIcon /></TraySlot>
          <TraySlot $w={50}><FaBluetoothB size={30} color="#d0d0d0" /></TraySlot>
          <TraySlot $w={132}><BatteryText>72%</BatteryText><BatteryIcon /></TraySlot>
          <TraySlot $w={60}><WifiIcon /></TraySlot>
          <TraySlot $w={64}><SearchIcon s={26} /></TraySlot>
          <TraySlot $w={56}><ToggleIcon /></TraySlot>
          <TraySlot $w={56}><SiriIcon /></TraySlot>
          <TrayText>Wed Apr 15  7:04 AM</TrayText>
        </StatusTray>
      </MenuBar>

      <Window>
        <GreenHead>
          <TitleRow>
            <TitleLeft>
              <Light $c="#ef6a5e" $dot="#7a1410" />
              <Light $c="#f5bd4f" />
              <Light $c="#62c655" />
              <QuickTools>
                <SideDocIcon />
                <SaveIcon />
                <UndoIcon />
                <RedoIcon />
                <CustomizeSlot><CustomizeIcon /></CustomizeSlot>
              </QuickTools>
            </TitleLeft>
            <TitleCenter><XlsDocIcon />ACCOUNTING FOR CORETAX (PRO)</TitleCenter>
            <TitleRight>
              <SearchBox>
                <SearchIcon s={24} c="#dfe8e1" w={1.8} />
                <SearchCaret width="10" height="7" viewBox="0 0 10 7" fill="none" stroke="#dfe8e1" strokeWidth="1.6"><path d="M1 1l4 4 4-4" /></SearchCaret>
                Search Sheet
              </SearchBox>
              <SmileyIcon />
              <span style={{ marginLeft: 6, display: 'flex' }}><Tri c="#dfe8e1" w={10} h={7} /></span>
            </TitleRight>
          </TitleRow>
          <TabsRow>
            {TABS.map(t => <RibbonTab key={t} $active={t === 'Data'}>{t}</RibbonTab>)}
            <ShareBox><ShareUser />Share<ShareCaret><ChevronUp /></ShareCaret></ShareBox>
          </TabsRow>
        </GreenHead>

        <Ribbon>
          <RibbonGroup $w={313} $pad={11}>
            <RibbonButton $w={72}><HtmlIcon /><span>From<br />HTML</span></RibbonButton>
            <RibbonButton $w={76}><TextIcon /><span>From<br />Text</span></RibbonButton>
            <RibbonButton $w={140}><DbIcon /><span>New Database<br />Query</span></RibbonButton>
          </RibbonGroup>
          <RibbonGroup $w={293} $pad={10}>
            <RibbonButton $w={90}><RefreshIcon /><span>Refresh<br />All</span></RibbonButton>
            <Stack $ml={18} $mt={-5}>
              <StackRow $h={41.5}><ConnIcon />Connections</StackRow>
              <StackRow $h={41.5} $dim><PropsIcon />Properties</StackRow>
              <StackRow $h={41.5} $dim><LinksIcon />Edit Links</StackRow>
            </Stack>
          </RibbonGroup>
          <RibbonGroup $w={158} $pad={31}>
            <Stack $mt={3}>
              <StackRow $h={53}><SortSmall top="A" bottom="Z" /></StackRow>
              <StackRow $h={53}><SortSmall top="Z" bottom="A" /></StackRow>
            </Stack>
            <RibbonButton $w={80} $ml={7}><SortBig /><span>Sort</span></RibbonButton>
          </RibbonGroup>
          <RibbonGroup $w={255} $pad={13}>
            <RibbonButton $w={70}><FilterBig /><span>Filter</span></RibbonButton>
            <Stack $ml={17} $mt={3}>
              <StackRow $h={53} $dim $gap={8}><ClearIcon />Clear</StackRow>
              <StackRow $h={53} $gap={8}><AdvIcon />Advanced</StackRow>
            </Stack>
          </RibbonGroup>
          <RibbonGroup $w={501} $pad={16}>
            <RibbonButton $w={76}><TextColsIcon /><span>Text to<br />Columns</span></RibbonButton>
            <RibbonButton $w={86}><FlashIcon /><span>Flash<br />Fill</span></RibbonButton>
            <RibbonButton $w={90}><RemoveDupIcon /><span>Remove<br />Duplicates</span></RibbonButton>
            <RibbonButton $w={114}><ValidationIcon /><span>Data<br />Validation</span></RibbonButton>
            <RibbonButton $w={96}><ConsolidateIcon /><span>Consolidate</span></RibbonButton>
          </RibbonGroup>
          <RibbonGroup $w={113} $pad={10}>
            <RibbonButton $w={90}><WhatIfIcon /><span>What-If<br />Analysis</span></RibbonButton>
          </RibbonGroup>
          <RibbonGroup $w={600} $pad={16} $last>
            <RibbonButton $w={82}><GroupIcon /><span>Group</span></RibbonButton>
            <RibbonButton $w={104}><GroupIcon minus /><span>Ungroup</span></RibbonButton>
            <RibbonButton $w={76}><SubtotalIcon /><span>Subtotal</span></RibbonButton>
            <Stack $ml={20} $mt={3}>
              <StackRow $h={53} $dim $gap={7}><DetailIcon />Show Detail</StackRow>
              <StackRow $h={53} $dim $gap={7}><DetailIcon minus />Hide Detail</StackRow>
            </Stack>
          </RibbonGroup>
        </Ribbon>

        <UpdateBar>
          <UpdateClose>✕</UpdateClose>
          <UpdateTitle>Office Update</UpdateTitle>
          To keep up-to-date with security updates, fixes, and improvements, choose Check for Updates.
          <UpdateButton>Check for Updates</UpdateButton>
        </UpdateBar>

        <FormulaBar>
          <NameBox>D54<NameStepper /></NameBox>
          <FormulaTools>
            <svg width="22" height="22" viewBox="0 0 22 22" stroke="#cfcfcf" strokeWidth="3.4"><path d="M3 2l16 18M19 2L3 20" /></svg>
            <svg width="24" height="22" viewBox="0 0 24 22" fill="none" stroke="#cfcfcf" strokeWidth="3.4"><path d="M3 12l6 8L21 2" /></svg>
            <Fx>fx</Fx>
          </FormulaTools>
          <FormulaCaret><Tri c="#666" w={12} h={12} /></FormulaCaret>
        </FormulaBar>

        <SheetArea>
          <SheetMain>
            <ColumnHeads>
              <CornerCell>
                <svg width="22" height="22" viewBox="0 0 22 22"><path d="M22 0v22H0z" fill="#dedede" /></svg>
              </CornerCell>
              <ColHead $w={353}>A</ColHead>
              <ColHead $w={15}>B</ColHead>
              {sheetCols.map(([c, w]) => <ColHead key={c} $w={w} $sel={c === 'D'}>{c}</ColHead>)}
            </ColumnHeads>
            <SheetBody>
              <RowHeads>
                {rowNumbers.map(n => (
                  <RowHead key={n} $h={topRows[n - 1] || 28.4} $wide={n > 9} $freeze={n === 9}>{n}</RowHead>
                ))}
              </RowHeads>
              <SideColumn>
                <SideTop>
                  <BrandTop>ACCOUNTING</BrandTop>
                  <BrandMid><BrandBar />FOR<BrandBar /></BrandMid>
                  <BrandBottom>C<BrandO />RE<BrandGold>TAX</BrandGold></BrandBottom>
                  <LicenseRow>
                    <NavItem $h={63}><LockSlot><LockIcon /></LockSlot><NavLabel>LISENSI</NavLabel></NavItem>
                  </LicenseRow>
                </SideTop>
                <NavList>
                  <NavItem><GaugeIcon /><NavLabel>DASHBOARD</NavLabel></NavItem>
                  <NavItem><DbNavIcon /><NavLabel>MASTER DATA</NavLabel></NavItem>
                  <NavItem><CashIcon /><NavLabel>JURNAL<br />TRANSAKSI</NavLabel></NavItem>
                  <NavItem><LedgerIcon /><NavLabel>BUKU BESAR</NavLabel></NavItem>
                  <NavItem><CalendarIcon /><NavLabel>NERACA SALDO</NavLabel></NavItem>
                  <NavItem><OpenBookIcon /><NavLabel>NERACA</NavLabel></NavItem>
                </NavList>
              </SideColumn>
              <ColB />
              <Workspace>
                <TopPanel>
                  <TopLogo><LMark /></TopLogo>
                  <CompanyBlock>
                    <CompanyName>PT. CONTOH CEMERLANG</CompanyName>
                    <CompanyCity>JAKARTA</CompanyCity>
                    <NpwpRow>NPWP<NpwpValue>0000-0000-0000-0000</NpwpValue></NpwpRow>
                  </CompanyBlock>
                  <Banner>2025 | PENYUSUTAN</Banner>
                  <BannerIcon><BuildingsIcon /></BannerIcon>
                  <DateCell $col={3}>DATA DARI TGL</DateCell>
                  <DateCell $col={4} $gold>01-Jan-25</DateCell>
                  <DateCell $col={6}>SAMPAI TGL</DateCell>
                  <DateCell $col={7} $gold>31-Dec-25</DateCell>
                </TopPanel>
                <ReportBack>
                  <ReportPage>
                    <ReportHead>
                      <ReportLogo><LMark /></ReportLogo>
                      <ReportTitles>
                        <ReportCompany>PT. CONTOH CEMERLANG</ReportCompany>
                        <ReportName>LAPORAN PENYUSUTAN ASET TETAP</ReportName>
                        <ReportPeriod>Periode : 1 January 2025 s/d 31 December 2025</ReportPeriod>
                      </ReportTitles>
                    </ReportHead>
                    <ReportRule />
                    <SectionTitle>A. Jenis Harta Berwujud Bukan Bangunan Kelompok I (Penyusutan 4 Tahun)</SectionTitle>
                    <AssetTable>
                      <HeadCell>NO</HeadCell>
                      <HeadCell $span={2}>NAMA ASET TETAP</HeadCell>
                      <HeadCell $double>TANGGAL<br />PEMBELIAN</HeadCell>
                      <HeadCell $double>TANGGAL<br />PENJUALAN</HeadCell>
                      <HeadCell>HARGA BELI</HeadCell>
                      <HeadCell $tone="navy" $double>DISUSUTKAN<br />(BULAN)</HeadCell>
                      <HeadCell $tone="navy" $double>TOTAL<br />PENYUSUTAN</HeadCell>
                      <HeadCell $tone="navy" $double>NILAI BUKU<br />AKHIR</HeadCell>
                      {months.map(m => <HeadCell key={m} $tone="gold">{m}</HeadCell>)}
                      {assetRows.map(r => (
                        <React.Fragment key={r.no}>
                          <BodyCell>{r.no}</BodyCell>
                          <BodyCell $align="left">{r.name}</BodyCell>
                          <BodyCell />
                          <BodyCell>{r.date}</BodyCell>
                          <BodyCell />
                          <BodyCell $align="right">{r.price}</BodyCell>
                          <BodyCell>{r.span}</BodyCell>
                          <Money v={r.total} />
                          <Money v={r.book} />
                          <Money v={r.month} />
                          <Money v={r.month} />
                          <Money v={r.month} />
                        </React.Fragment>
                      ))}
                    </AssetTable>
                  </ReportPage>
                </ReportBack>
              </Workspace>
            </SheetBody>
          </SheetMain>
          <VScroll><VThumb /></VScroll>
        </SheetArea>

        <HScrollRow><HThumb /></HScrollRow>

        <TabsBar>
          <TabArrows>
            <svg width="14" height="24" viewBox="0 0 14 24"><path d="M13 0v24L0 12z" fill="#555" /></svg>
            <svg width="14" height="24" viewBox="0 0 14 24"><path d="M1 0v24l13-12z" fill="#555" /></svg>
          </TabArrows>
          {sheetTabs.map(([label, w, active, fade]) => (
            <SheetTab key={label} $w={w} $active={active}>
              {fade ? <FadeText $fade={fade}>{label}</FadeText> : label}
            </SheetTab>
          ))}
          <AddSheet>+</AddSheet>
        </TabsBar>

        <StatusBar>
          Ready
          <MacroIcon><MacroSvg /></MacroIcon>
          <ViewModes>
            <ViewMode $w={65} $on><GridView /></ViewMode>
            <ViewMode $w={62}><PageView /></ViewMode>
            <ViewMode $w={62}><BreakView /></ViewMode>
            <ZoomArea>
              <ZoomSign>-</ZoomSign>
              <ZoomTrack><ZoomThumb /></ZoomTrack>
              <ZoomSign>+</ZoomSign>
              <ZoomValue>80%</ZoomValue>
            </ZoomArea>
          </ViewModes>
        </StatusBar>
      </Window>

      <DesktopFrame />
      <Dock>
        {dockIcons.map((icon, i) => {
          if (icon === 'gap') return <DockGap key={`gap${i}`} />;
          return (
            <DockItem key={icon.key}>
              {icon}
              {(icon.key === 'remind' || icon.key === 'prefs') && <DockBadge>2</DockBadge>}
              {['finder', 'excel', 'chrome'].includes(icon.key) && <DockDot />}
            </DockItem>
          );
        })}
      </Dock>
    </Screen>
  );
}
